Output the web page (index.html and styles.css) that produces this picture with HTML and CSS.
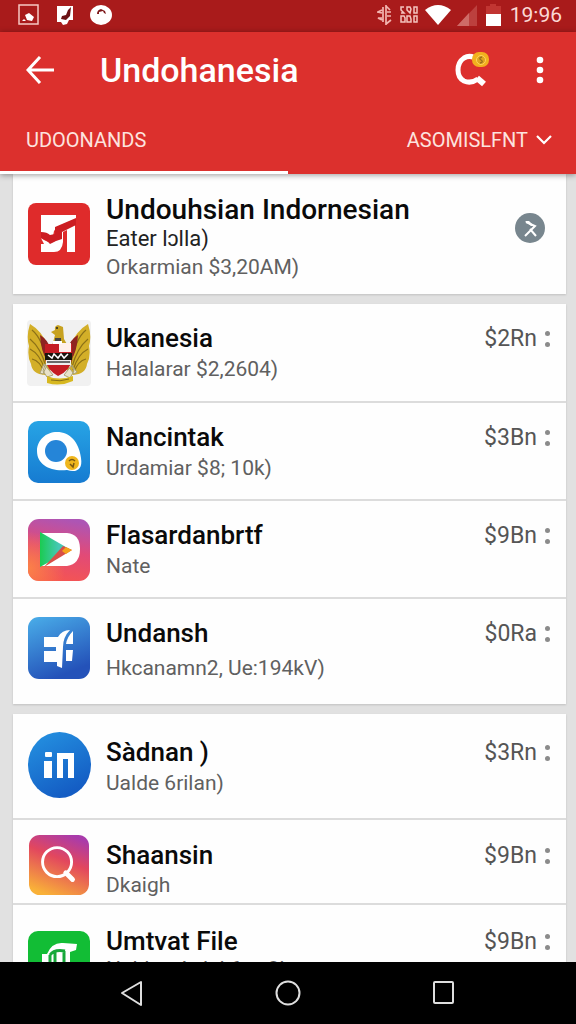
FILE: index.html
```html
<!DOCTYPE html>
<html lang="id">
<head>
<meta charset="utf-8">
<meta name="viewport" content="width=device-width, initial-scale=1">
<title>Undohanesia</title>
<link rel="stylesheet" href="styles.css">
</head>
<body>
<div class="statusbar">
  <div class="status-group status-left">
    <svg width="22" height="22" viewBox="0 0 22 22"><rect x="1" y="1" width="19" height="19" fill="none" stroke="#f6c9c4" stroke-width="1.5"/><path d="M4 17l2-2 2 2zM7 11l4-2 5 4-2 4-5-1z" fill="#fff"/></svg>
    <svg width="20" height="22" viewBox="0 0 20 22"><path d="M2 2h16v14h-4l-2 4-4 1-2-3H2z" fill="#fff"/><path d="M16 3l-1 9-4 4-5-1 1-3 4-1 2-5z" fill="#6b1114"/></svg>
    <svg width="22" height="22" viewBox="0 0 22 22"><ellipse cx="11" cy="11" rx="11" ry="10" fill="#fff"/><path d="M7 10q0-4 4-5l4 2 1 3-2-1-1-2-4 1v2z" fill="#7d1719"/></svg>
  </div>
  <div class="status-group status-right">
    <svg width="16" height="22" viewBox="0 0 16 22" fill="none" stroke="#f2b5b0" stroke-width="1.7"><path d="M5 6L1 8l4 1M5 14H1l4 2M6 3v15M9 1v20M9 2l4 4M10 8h4M10 12h4M9 20l5-4"/></svg>
    <svg width="20" height="20" viewBox="0 0 20 20" fill="none" stroke="#f4c3be" stroke-width="1.500"><path d="M5 2H2v3l3 3H2M11 2H8v3l3 3 1-4zM18 2h-3v6h3zM5 11H2v6h4v-4zM11 11H8v6h4v-3zM18 11h-3v6h3z"/></svg>
    <svg width="26" height="20" viewBox="0 0 26 20"><path d="M0 5Q13-5 26 5L13 20z" fill="#fff"/></svg>
    <svg width="20" height="21" viewBox="0 0 20 21"><path d="M20 0v21H0z" fill="#bc403e"/><path d="M12 8v13H0z" fill="#cf6b67"/></svg>
    <svg class="battery" width="15" height="22" viewBox="0 0 15 22"><path d="M0 2h4V0h6v2h5v9H0z" fill="#c13532"/><path d="M0 10h15v12H0z" fill="#fff"/></svg>
    <span class="clock">19:96</span>
  </div>
</div>

<header class="appbar">
  <div class="toolbar">
    <button class="icon-button" aria-label="Back"><svg width="28" height="28" viewBox="0 0 28 28" fill="none" stroke="#fff" stroke-width="3"><path d="M14 1L2 14l12 13M2 14h26"/></svg></button>
    <h1 class="app-title">Undohanesia</h1>
    <button class="icon-button" aria-label="Search"><svg width="36" height="36" viewBox="0 0 36 36"><path d="M20 5.500Q15 3 10 6 4 10 4 18q0 8 6 11 7 3 14-2" fill="none" stroke="#fff" stroke-width="5"/><path d="M23 26l7 6" stroke="#fff" stroke-width="6"/><rect x="18" y="0" width="17" height="15" rx="7" fill="#f2b01e"/><circle cx="27" cy="8" r="4.500" fill="#dfa31f" stroke="#ffd65b" stroke-width="1"/><path d="M28 5q-4 1-1 3t-1 3" fill="none" stroke="#98701e" stroke-width="1.300"/></svg></button>
    <button class="icon-button" aria-label="More options"><svg width="8" height="28" viewBox="0 0 8 28" fill="#fff"><circle cx="4" cy="4" r="3.300"/><circle cx="4" cy="14" r="3.300"/><circle cx="4" cy="24" r="3.300"/></svg></button>
  </div>
  <nav class="tabs">
    <a class="tab tab-active" href="#all">UDOONANDS</a>
    <a class="tab tab-end" href="#sort">ASOMISLFNT
      <svg width="16" height="10" viewBox="0 0 16 10" fill="none" stroke="#fff" stroke-width="2.200"><path d="M1 1l7 7 7-7"/></svg></a>
  </nav>
</header>

<main class="list">
  <section class="card">
    <article class="row row-featured">
      <svg class="app-icon" viewBox="0 0 62 62"><rect width="62" height="62" rx="8" fill="#df2b2b"/><path d="M13 12h35v4L29 24l-3 4-1 5-3 3-9-5z" fill="#fff"/><path d="M13 35q6 5 12 4l3-2V26l19-9v32h-8V27l-4 2v10q-1 10-9 10H13v-8h3z" fill="#fff"/><path d="M13 29q6 0 9 3l5-1V24l21-9v7L34 29v7l-6 2-6 3q-3-4-9-6z" fill="#cc1d22"/></svg>
      <div class="row-text">
        <h2 class="name">Undouhsian Indornesian</h2>
        <p class="tagline">Eater lɔlla)</p>
        <p class="detail">Orkarmian $3,20AM)</p>
      </div>
      <button class="round-button" aria-label="Dismiss"><svg width="30" height="30" viewBox="0 0 30 30"><circle cx="15" cy="15" r="15" fill="#78868e"/><path d="M11 9l9 4-10 10M15 16l6 7" fill="none" stroke="#fff" stroke-width="2"/><path d="M10 8l4 0 5 5-3 0z" fill="#fff"/></svg></button>
    </article>
  </section>

  <section class="card">
    <article class="row row-emblem">
      <svg class="app-icon app-icon-large" viewBox="0 0 64 66"><rect width="64" height="66" rx="4" fill="#f1f1f1"/><path d="M3 4q12 7 18 22l5 22-8 7Q5 54 4 44 0 36 2 26-1 16 3 4zM61 4Q49 11 43 26l-5 22 8 7q13-1 14-11 4-8 2-18 3-10-1-22z" fill="#d3af28"/><path d="M5 10q11 9 15 34M3 19q11 9 16 28M3 29q10 5 15 21M5 39q8 2 12 13M59 10q-11 9-15 34M61 19Q50 28 45 47M61 29q-10 5-15 21M59 39q-8 2-12 13" fill="none" stroke="#8c7118" stroke-width="1.200"/><path d="M13 15q8 5 10 13l-3 12q-6-8-7-25zM51 15q-8 5-10 13l3 12q6-8 7-25z" fill="#8e2321"/><path d="M24 12l4-2q-1-4 3-5l5 2 1 12 4 7H25l3-11z" fill="#c7a221"/><circle cx="30" cy="8" r="1" fill="#222"/><path d="M28 18h6v5h-6z" fill="#444"/><path d="M20 45l-4 9-3-1 4-9zM43 44l7 8-3 2-7-9zM18 45l8 10-6 2-4-6zM45 45l-8 10 6 3 4-7z" fill="#e8e2c9" stroke="#aaa276"/><path d="M18 24h27v15q-2 12-14 17-11-6-13-17z" fill="#c51c23"/><path d="M32 23h12v9H32z" fill="#fff0ec"/><path d="M26 21h9v3h-9z" fill="#fff"/><path d="M18 33h27v7H18z" fill="#19170e"/><path d="M21 35l4 3 2-4 4 4 3-4 3 4 4-4" fill="none" stroke="#fff" stroke-width="1.500"/><path d="M19 40h25v5H19z" fill="#eee"/><path d="M20 42h23" stroke="#222" stroke-width="1.300"/><path d="M20 56q12 5 26 0v5q-13 6-26 2z" fill="#d7b820"/><path d="M24 60q9 2 18-1" fill="none" stroke="#876f19"/></svg>
      <div class="row-text">
        <h2 class="name">Ukanesia</h2>
        <p class="detail">Halalarar $2,2604)</p>
      </div>
      <div class="price-box"><span class="price">$2Rn</span><button class="more" aria-label="More about Ukanesia"></button></div>
    </article>
    <article class="row">
      <svg class="app-icon" viewBox="0 0 62 62"><defs><linearGradient id="blue-a" x1="0" y1="0" x2="0" y2="1"><stop stop-color="#27a4e5"/><stop offset="1" stop-color="#167bd1"/></linearGradient></defs><rect width="62" height="62" rx="10" fill="url(#blue-a)"/><path d="M29 11c13 0 22 10 24 26 2 12-5 15-14 12-16 2-30-5-30-19 0-11 9-19 20-19z" fill="#fff"/><circle cx="28" cy="30" r="11" fill="#2585d8"/><circle cx="44" cy="42" r="7" fill="#efb61d"/><path d="M41 40q3-3 6 0M42 43l3 3 1-4" fill="none" stroke="#785813" stroke-width="1.500"/></svg>
      <div class="row-text">
        <h2 class="name">Nancintak</h2>
        <p class="detail">Urdamiar $8; 10k)</p>
      </div>
      <div class="price-box"><span class="price">$3Bn</span><button class="more" aria-label="More about Nancintak"></button></div>
    </article>
    <article class="row">
      <svg class="app-icon" viewBox="0 0 62 62"><defs><linearGradient id="sunset" x1=".6" y1="0" x2=".4" y2="1"><stop stop-color="#ad55b5"/><stop offset=".5" stop-color="#e24a77"/><stop offset="1" stop-color="#f55551"/></linearGradient><linearGradient id="play" x1="0" y1="0" x2="1" y2="0"><stop stop-color="#1bcb51"/><stop offset=".6" stop-color="#45c8b4"/></linearGradient><radialGradient id="sunset-glow" cx="0" cy=".8" r=".6"><stop stop-color="#fb8148"/><stop offset="1" stop-color="#fb8148" stop-opacity="0"/></radialGradient></defs><rect width="62" height="62" rx="11" fill="url(#sunset)"/><rect width="62" height="62" rx="11" fill="url(#sunset-glow)"/><path d="M13 14h26q13 1 13 16T39 47H13z" fill="#fff"/><path d="M12 13l31 18-31 17z" fill="url(#play)"/><path d="M16 48l19-21 9 4z" fill="#d84f47"/><path d="M34 32l4-4 6 3-6 4z" fill="#f5a31b"/></svg>
      <div class="row-text">
        <h2 class="name">Flasardanbrtf</h2>
        <p class="detail">Nate</p>
      </div>
      <div class="price-box"><span class="price">$9Bn</span><button class="more" aria-label="More about Flasardanbrtf"></button></div>
    </article>
    <article class="row row-spaced">
      <svg class="app-icon" viewBox="0 0 62 62"><defs><linearGradient id="blue-b" x1="0" y1="0" x2=".4" y2="1"><stop stop-color="#4aaee9"/><stop offset="1" stop-color="#2452b9"/></linearGradient></defs><rect width="62" height="62" rx="11" fill="url(#blue-b)"/><path d="M16 20h14q4-7 12-7-7 7-7 17l-1 21-5-2v-4H16V34h12v-4H16z" fill="#fff"/><path d="M45 14v13h-7q1-7 7-13zM38 33h7l-1 11h-6z" fill="#fff"/></svg>
      <div class="row-text">
        <h2 class="name">Undansh</h2>
        <p class="detail">Hkcanamn2, Ue:194kV)</p>
      </div>
      <div class="price-box"><span class="price">$0Ra</span><button class="more" aria-label="More about Undansh"></button></div>
    </article>
  </section>

  <section class="card">
    <article class="row row-round">
      <svg class="app-icon app-icon-large" viewBox="0 0 64 66"><defs><linearGradient id="blue-c" x1="0" y1="0" x2=".5" y2="1"><stop stop-color="#2594e2"/><stop offset="1" stop-color="#145dc4"/></linearGradient></defs><ellipse cx="32.500" cy="33" rx="31.500" ry="33" fill="url(#blue-c)"/><g fill="#fff"><rect x="18" y="20" width="7" height="5" rx="1"/><rect x="17" y="29" width="8" height="17"/></g><path d="M33 46V24h11v22" fill="none" stroke="#fff" stroke-width="6"/></svg>
      <div class="row-text">
        <h2 class="name">Sàdnan )</h2>
        <p class="detail">Ualde 6rilan)</p>
      </div>
      <div class="price-box"><span class="price">$3Rn</span><button class="more" aria-label="More about Sàdnan"></button></div>
    </article>
    <article class="row row-tight">
      <svg class="app-icon" viewBox="0 0 62 62"><defs><linearGradient id="warm" x1=".7" y1="0" x2=".3" y2="1"><stop stop-color="#a93bab"/><stop offset=".4" stop-color="#e2475e"/><stop offset="1" stop-color="#f9b138"/></linearGradient></defs><rect width="62" height="62" rx="11" fill="url(#warm)"/><circle cx="29" cy="28" r="15" fill="none" stroke="#fff" stroke-width="3"/><path d="M38 39l7 7" stroke="#fff" stroke-width="5" stroke-linecap="round"/></svg>
      <div class="row-text">
        <h2 class="name">Shaansin</h2>
        <p class="detail">Dkaigh</p>
      </div>
      <div class="price-box"><span class="price">$9Bn</span><button class="more" aria-label="More about Shaansin"></button></div>
    </article>
    <article class="row row-clipped">
      <svg class="app-icon" viewBox="0 0 62 62"><rect width="62" height="62" rx="10" fill="#12bd35"/><path d="M14 23h5q5-12 16-11l14 1-1 6-6 2v26H14z" fill="#fff"/><path d="M22 24q4-6 15-4M27 20v24M36 20v24M22 24v20" fill="none" stroke="#17a83a" stroke-width="3"/></svg>
      <div class="row-text">
        <h2 class="name">Umtvat File</h2>
        <p class="detail">Naldan Anlal 6ttr 8k</p>
      </div>
      <div class="price-box"><span class="price">$9Bn</span><button class="more" aria-label="More about Umtvat File"></button></div>
    </article>
  </section>
</main>

<footer class="navbar">
  <button class="nav-button" aria-label="Back"><svg width="24" height="26" viewBox="0 0 24 26" fill="none" stroke="#dedede" stroke-width="2" stroke-linejoin="round"><path d="M21 2v23L2 13z"/></svg></button>
  <button class="nav-button" aria-label="Home"><svg width="26" height="26" viewBox="0 0 26 26" fill="none" stroke="#dedede" stroke-width="2"><circle cx="13" cy="13" r="11.500"/></svg></button>
  <button class="nav-button" aria-label="Recent apps"><svg width="24" height="26" viewBox="0 0 24 26" fill="none" stroke="#dedede" stroke-width="2"><rect x="2" y="2" width="19" height="21" rx="1"/></svg></button>
</footer>
</body>
</html>
```

FILE: styles.css
```css
* { box-sizing: border-box; }

body {
  margin: 0;
  height: 100vh;
  display: flex;
  flex-direction: column;
  overflow: hidden;
  background: #e1e1e1;
  font-family: Roboto, "Liberation Sans", sans-serif;
}

h1, h2, p { margin: 0; font-weight: 400; }

button {
  border: 0;
  padding: 0;
  background: none;
  font: inherit;
  color: inherit;
}

svg { display: block; flex: none; }

.statusbar {
  flex: none;
  height: 32px;
  padding: 0 14px 2px 18px;
  display: flex;
  align-items: center;
  justify-content: space-between;
  background: #a91b1b;
  color: #fbd9d5;
}

.status-group { display: flex; align-items: center; }
.status-left { gap: 15px; }
.status-right { gap: 6px; }
.battery { margin: 0 3px; }
.clock { font-size: 21px; line-height: 28px; }

.appbar {
  flex: none;
  position: relative;
  z-index: 1;
  background: #dc302d;
  color: #fff;
  box-shadow: 0 1px 6px rgba(0, 0, 0, 0.4);
}

.toolbar {
  height: 76px;
  padding: 0 32px 0 26px;
  display: flex;
  align-items: center;
}

.app-title {
  flex: 1;
  margin-left: 46px;
  font-size: 34px;
  line-height: 40px;
  font-weight: 500;
}

.toolbar .icon-button + .icon-button { margin-left: 46px; }

.tabs { display: flex; }

.tab {
  flex: 1;
  height: 66px;
  padding: 0 24px 0 26px;
  display: flex;
  align-items: center;
  gap: 8px;
  border-bottom: 3px solid transparent;
  color: #fde3df;
  font-size: 20px;
  text-decoration: none;
}

.tab-active { border-bottom-color: #fff; }
.tab-end { justify-content: flex-end; }

.list {
  flex: 1;
  min-height: 0;
  overflow: hidden;
  padding: 0 10px 0 13px;
  display: flex;
  flex-direction: column;
  gap: 10px;
}

.card {
  flex: none;
  background: #fefefe;
  box-shadow: 0 1px 2px rgba(0, 0, 0, 0.15);
}

.row {
  display: flex;
  align-items: flex-start;
  padding: 18px 15px 16px 14px;
  border-bottom: 2px solid #dcdcdc;
}

.row:last-child { border-bottom: 0; }

.app-icon {
  width: 62px;
  height: 62px;
  margin: 0 16px 0 1px;
}

.app-icon-large {
  width: 64px;
  height: 66px;
  margin: 0 15px 0 0;
}

.row-text { flex: 1; }

.name {
  font-size: 26px;
  line-height: 32px;
  font-weight: 500;
  color: #0a0a0a;
}

.tagline { font-size: 22px; line-height: 26px; color: #222; }
.detail { font-size: 21px; line-height: 30px; color: #606060; }

.price-box {
  display: flex;
  align-items: center;
  gap: 8px;
  color: #555;
}

.price { font-size: 23px; line-height: 34px; }

.more {
  width: 6px;
  height: 16px;
  display: flex;
  flex-direction: column;
  justify-content: space-between;
}

.more::before,
.more::after {
  content: "";
  width: 5px;
  height: 5px;
  border-radius: 50%;
  background: #8b8b8b;
}

.row-featured { padding: 20px 21px 12px 14px; }
.row-featured .app-icon { margin-top: 9px; }
.row-featured .round-button { margin-top: 19px; }
.row-featured .name { font-size: 28px; }

.row-emblem { padding-top: 16px; padding-bottom: 15px; }
.row-emblem .row-text,
.row-emblem .price-box { margin-top: 2px; }

.row-spaced { padding-bottom: 21px; }
.row-spaced .detail { margin-top: 4px; }

.row-round { padding-bottom: 20px; }
.row-round .row-text,
.row-round .price-box { margin-top: 4px; }

.row-tight { padding-top: 15px; padding-bottom: 4px; }
.row-tight .row-text,
.row-tight .price-box { margin-top: 4px; }
.row-tight .detail { line-height: 28px; }
.row-tight .app-icon { height: 60px; }

.row-clipped .app-icon { margin-top: 8px; }
.row-clipped .row-text,
.row-clipped .price-box { margin-top: 2px; }
.row-clipped .detail { line-height: 24px; }

.navbar {
  flex: none;
  height: 62px;
  padding: 0 120px;
  display: flex;
  align-items: center;
  justify-content: space-between;
  background: #000;
}
```
